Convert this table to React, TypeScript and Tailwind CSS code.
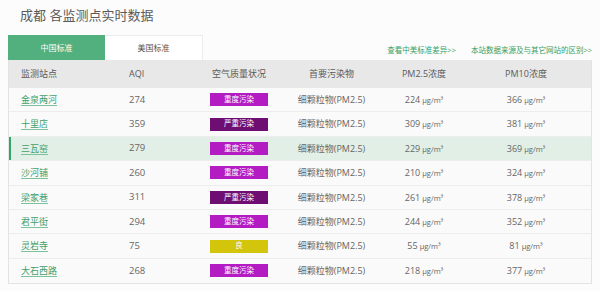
import React from "react";

type Row = { name: string; aqi: string; level: "heavy" | "severe" | "good"; pm25: string; pm10: string; active?: boolean };

const rows: Row[] = [
  { name: "金泉两河", aqi: "274", level: "heavy", pm25: "224", pm10: "366" },
  { name: "十里店", aqi: "359", level: "severe", pm25: "309", pm10: "381" },
  { name: "三瓦窑", aqi: "279", level: "heavy", pm25: "229", pm10: "369", active: true },
  { name: "沙河铺", aqi: "260", level: "heavy", pm25: "210", pm10: "324" },
  { name: "梁家巷", aqi: "311", level: "severe", pm25: "261", pm10: "378" },
  { name: "君平街", aqi: "294", level: "heavy", pm25: "244", pm10: "352" },
  { name: "灵岩寺", aqi: "75", level: "good", pm25: "55", pm10: "81" },
  { name: "大石西路", aqi: "268", level: "heavy", pm25: "218", pm10: "377" },
];

const badge = {
  heavy: { text: "重度污染", cls: "bg-[#b31cc2]" },
  severe: { text: "严重污染", cls: "bg-[#6f0e72]" },
  good: { text: "良", cls: "bg-[#d3c40c]" },
};

const cols = "grid grid-cols-[112px_78px_80px_105px_80px_124px]";

function Unit() {
  return <span className="text-[7.5px] ml-[2px]">μg/m³</span>;
}

export default function App() {
  return (
    <div
      className="w-[600px] h-[291px] bg-[#fcfcfc] text-[#666] overflow-hidden"
      style={{ fontFamily: '"Open Sans", "Noto Sans CJK SC", sans-serif' }}
    >
      <div className="h-[35px] pl-[20px] pt-[6px] text-[13px] leading-[18px] text-[#5a5a5a]">成都 各监测点实时数据</div>
      <div className="mx-[8px] flex items-end h-[25px]">
        <div className="w-[97px] h-[25px] bg-[#52b07e] text-white text-[8px] flex items-center justify-center">中国标准</div>
        <div className="w-[98px] h-[25px] bg-white border-t border-r border-[#ececec] text-[8px] flex items-center justify-center text-[#555]">美国标准</div>
        <div className="flex-1 flex justify-end items-center gap-[15px] pb-[4px] text-[7.5px] text-[#33a065]">
          <span>查看中美标准差异&gt;&gt;</span>
          <span>本站数据来源及与其它网站的区别&gt;&gt;</span>
        </div>
      </div>
      <div className="mx-[8px] border-l border-r border-b border-[#e3e3e3]">
        <div className={`${cols} h-[28px] items-center bg-[#e8e8e8] text-[9px] text-[#5a5a5a]`}>
          <div className="pl-[12px]">监测站点</div>
          <div className="pl-[8px]">AQI</div>
          <div className="text-center">空气质量状况</div>
          <div className="text-center">首要污染物</div>
          <div className="text-center">PM2.5浓度</div>
          <div className="text-center">PM10浓度</div>
        </div>
        {rows.map((r, i) => (
          <div
            key={r.name}
            className={`${cols} h-[24.4px] items-center text-[9px] ${i < rows.length - 1 ? "border-b border-[#ededed]" : ""} ${
              r.active ? "bg-[#e1efe7] shadow-[inset_2px_0_0_#2fa866]" : "bg-[#fafafa]"
            }`}
          >
            <div className="pl-[12px]">
              <span className="text-[#3f9f6c] underline underline-offset-2 decoration-[#7cc39c]">{r.name}</span>
            </div>
            <div className="pl-[8px] text-[9.5px]">{r.aqi}</div>
            <div className="flex justify-center">
              <div className={`w-[58px] h-[13px] ${badge[r.level].cls} text-white text-[7.5px] flex items-center justify-center`}>
                {badge[r.level].text}
              </div>
            </div>
            <div className="text-center">细颗粒物(PM2.5)</div>
            <div className="text-center">
              {r.pm25}
              <Unit />
            </div>
            <div className="text-center">
              {r.pm10}
              <Unit />
            </div>
          </div>
        ))}
      </div>
    </div>
  );
}
